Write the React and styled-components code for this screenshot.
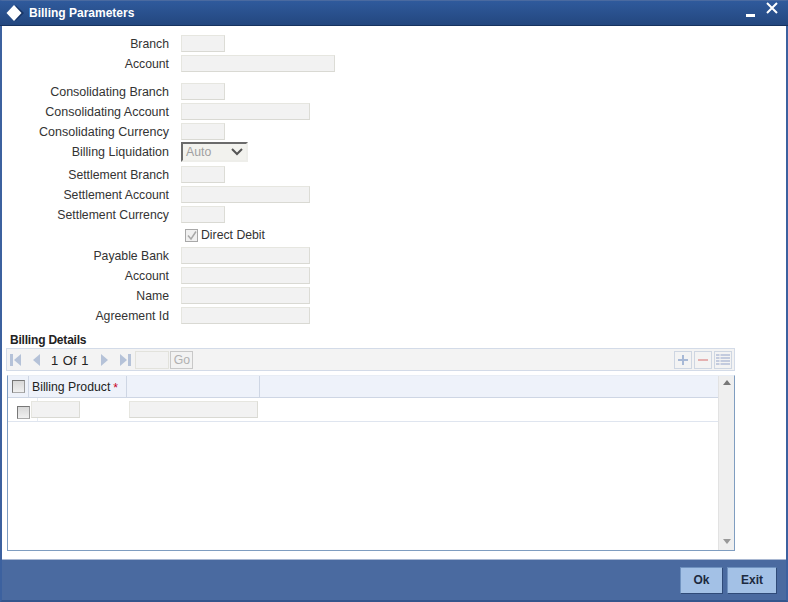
import React from "react";
import styled, { createGlobalStyle } from "styled-components";

const GlobalStyle = createGlobalStyle`
  html, body { margin: 0; padding: 0; background: #fff; }
  body { font-family: "Liberation Sans", Arial, sans-serif; font-size: 12.25px; color: #333; }
`;

const Window = styled.div`
  width: 788px;
  height: 602px;
  box-sizing: border-box;
  display: flex;
  flex-direction: column;
  background: #fff;
  border-top: 1px solid #4a6aa0;
  border-left: 2px solid #3c619f;
  border-right: 2px solid #3c619f;
  border-bottom: 2px solid #34558c;
`;

const TitleBar = styled.header`
  height: 24px;
  flex: none;
  display: flex;
  align-items: center;
  padding: 0 0 0 6px;
  margin-left: -2px;
  margin-right: -2px;
  background: linear-gradient(#2f5a9c, #23477f);
  border-bottom: 1px solid #16325f;
  color: #fff;
`;

const Title = styled.h1`
  margin: 0 0 0 5px;
  font-size: 12px;
  font-weight: 700;
  flex: 1;
`;

const WinControls = styled.div`
  display: flex;
  align-items: flex-start;
  gap: 11px;
  margin: -6px 10px 0 0;
`;

const Form = styled.section`
  display: flex;
  flex-direction: column;
  padding-top: 8px;
`;

const Row = styled.div`
  display: flex;
  align-items: center;
  height: 20px;
  margin-top: ${(p) => p.$top || 0}px;
`;

const Label = styled.label`
  width: 167px;
  text-align: right;
  margin-right: 12px;
  flex: none;
  white-space: nowrap;
  font-size: ${(p) => (p.$wide ? "12.5px" : "inherit")};
`;

const Input = styled.div`
  box-sizing: border-box;
  width: ${(p) => p.$w}px;
  height: 17px;
  margin-bottom: 1px;
  flex: none;
  background: #f2f2f2;
  border: 1px solid #e6e6e0;
  border-bottom-color: #d9d9d3;
  border-right-color: #dcdcd6;
`;

const SelectBox = styled.div`
  box-sizing: border-box;
  width: 67px;
  height: 20px;
  display: flex;
  align-items: center;
  justify-content: space-between;
  padding: 0 3px 0 3px;
  background: #f2f2ee;
  border: 2px solid #eeeeea;
  border-top-color: #6b6b6b;
  border-left-color: #6b6b6b;
  color: #a0a0a0;
`;

const CheckRow = styled(Row)`
  padding-left: 183px;
  gap: 3px;
  color: #333;
`;

const DisabledCheck = styled.span`
  box-sizing: border-box;
  width: 13px;
  height: 13px;
  display: flex;
  background: #f0f0f0;
  border: 1px solid #a8a8a8;
`;

const SectionTitle = styled.h2`
  margin: 6px 0 0 8px;
  font-size: 12px;
  letter-spacing: -0.2px;
  line-height: 16px;
  font-weight: 700;
  color: #222;
`;

const Toolbar = styled.div`
  box-sizing: border-box;
  width: 729px;
  height: 23px;
  margin: 0 0 0 4px;
  display: flex;
  align-items: center;
  padding: 0 2px 0 3px;
  background: #f3f3f3;
  border: 1px solid #d3dbe8;
`;

const Pager = styled.span`
  margin: 1px 12px 0 10px;
  font-size: 13px;
  word-spacing: 1px;
  color: #222;
`;

const PageInput = styled.div`
  box-sizing: border-box;
  width: 34px;
  height: 18px;
  margin-left: 4px;
  background: #f2f2f2;
  border: 1px solid #e2e2dc;
`;

const GoButton = styled.div`
  box-sizing: border-box;
  width: 23px;
  height: 18px;
  margin-left: 1px;
  border: 1px solid #c8c8c8;
  background: #f2f2f2;
  color: #b0b0b0;
  text-align: center;
  line-height: 16px;
`;

const Spacer = styled.div`
  flex: 1;
`;

const ToolButton = styled.div`
  box-sizing: border-box;
  width: 18px;
  height: 18px;
  margin-left: 2px;
  display: flex;
  align-items: center;
  justify-content: center;
  border: 1px solid #ced6e2;
  background: #f3f3f3;
`;

const Table = styled.div`
  box-sizing: border-box;
  width: 728px;
  height: 176px;
  margin: 4px 0 0 5px;
  display: flex;
  border: 1px solid #7f9dc0;
  border-top-color: #e8edf5;
`;

const TableMain = styled.div`
  flex: 1;
  min-width: 0;
`;

const HeadRow = styled.div`
  height: 21px;
  display: flex;
  background: #eef2fa;
  border-bottom: 1px solid #ced6e4;
`;

const HeadCell = styled.div`
  box-sizing: border-box;
  width: ${(p) => p.$w}px;
  flex: none;
  display: flex;
  align-items: center;
  padding-left: ${(p) => p.$pad || 0}px;
  border-right: 1px solid #ced6e4;
  color: #222;
`;

const Required = styled.span`
  color: #c8001e;
  margin: 3px 0 0 3px;
`;

const Check = styled.span`
  box-sizing: border-box;
  width: 13px;
  height: 13px;
  flex: none;
  background: linear-gradient(#d8d8d8, #f0f0f0);
  border: 1px solid #777;
  border-right-color: #999;
  border-bottom-color: #aaa;
`;

const BodyRow = styled.div`
  height: 23px;
  display: flex;
  align-items: center;
  border-bottom: 1px solid #dfe5ef;
`;

const CheckCell = styled.div`
  box-sizing: border-box;
  width: 30px;
  height: 100%;
  flex: none;
  display: flex;
  align-items: center;
  padding: 5px 0 0 9px;
  border-right: 1px solid #e6ebf3;
`;

const RowInput = styled(Input)`
  margin-bottom: 0;
  margin-left: ${(p) => p.$left}px;
`;

const ScrollBar = styled.div`
  width: 15px;
  flex: none;
  display: flex;
  flex-direction: column;
  justify-content: space-between;
  align-items: center;
  padding: 4px 0 6px;
  background: #efefef;
  border-left: 1px solid #e2e2e2;
`;

const Footer = styled.footer`
  margin-top: auto;
  height: 40px;
  flex: none;
  display: flex;
  justify-content: flex-end;
  align-items: center;
  gap: 4px;
  padding-right: 9px;
  background: #4a6aa0;
  border-top: 1px solid #a9b8d2;
`;

const FootButton = styled.button`
  box-sizing: border-box;
  height: 27px;
  width: ${(p) => p.$w}px;
  padding: 0;
  font: 700 12px "Liberation Sans", Arial, sans-serif;
  color: #1c2a40;
  background: #a3c1e6;
  border: 1px solid #6f92c0;
  border-right-color: #2f4a78;
  border-bottom-color: #2f4a78;
`;

const Diamond = () => (
  <svg width="18" height="18" viewBox="0 0 18 18">
    <path d="M9.5 1 L18 9 L9.5 17 Z" fill="#0f2a55" opacity="0.7" />
    <path d="M8 1 L15.5 9 L8 17 L0.5 9 Z" fill="#fff" />
  </svg>
);

const MinIcon = () => (
  <svg width="9" height="16" viewBox="0 0 9 16">
    <rect x="0" y="12" width="9" height="3" fill="#fff" />
  </svg>
);

const CloseIcon = () => (
  <svg width="12" height="12" viewBox="0 0 12 12">
    <path d="M1 1 L11 11 M11 1 L1 11" stroke="#fff" strokeWidth="2" />
  </svg>
);

const Chevron = () => (
  <svg width="12" height="8" viewBox="0 0 12 8">
    <path d="M1 1 L6 6 L11 1" fill="none" stroke="#555" strokeWidth="2" />
  </svg>
);

const Tick = () => (
  <svg width="11" height="11" viewBox="0 0 11 11">
    <path d="M2 5.5 L5 9 L10 1.5" fill="none" stroke="#a8a8a8" strokeWidth="1.5" />
  </svg>
);

const PageIcon = ({ dir, bar, gap }) => (
  <svg
    width={bar ? 12 : 8}
    height="14"
    viewBox={bar ? "0 0 12 14" : "0 0 8 14"}
    style={{ marginRight: gap }}
  >
    {bar && dir === "left" && <rect x="0" y="1" width="3" height="12" fill="#b5c2d8" />}
    {bar && dir === "right" && <rect x="9" y="1" width="3" height="12" fill="#b5c2d8" />}
    {dir === "left" ? (
      <path d={bar ? "M11 1 V13 L4 7 Z" : "M7 1 V13 L0 7 Z"} fill="#b5c2d8" />
    ) : (
      <path d="M1 1 V13 L8 7 Z" fill="#b5c2d8" />
    )}
  </svg>
);

const PlusIcon = () => (
  <svg width="12" height="12" viewBox="0 0 12 12">
    <path d="M6 1 V11 M1 6 H11" stroke="#a8b9d6" strokeWidth="2" />
  </svg>
);

const MinusIcon = () => (
  <svg width="12" height="12" viewBox="0 0 12 12">
    <path d="M1 6 H11" stroke="#e5b0b0" strokeWidth="2" />
  </svg>
);

const ListIcon = () => (
  <svg width="14" height="12" viewBox="0 0 14 12">
    <path d="M0 1 H14 M0 4 H14 M0 7 H14 M0 10 H14" stroke="#b4bfd8" strokeWidth="1.5" />
    <path d="M4 0 V12" stroke="#f3f3f3" strokeWidth="1" />
  </svg>
);

const ScrollArrow = ({ up }) => (
  <svg width="8" height="5" viewBox="0 0 8 5">
    <path d={up ? "M4 0 L8 5 H0 Z" : "M0 0 H8 L4 5 Z"} fill={up ? "#777" : "#999"} />
  </svg>
);

const Field = ({ label, w, top, wide }) => (
  <Row $top={top}>
    <Label $wide={wide}>{label}</Label>
    <Input $w={w} />
  </Row>
);

export default function App() {
  return (
    <>
      <GlobalStyle />
      <Window>
        <TitleBar>
          <Diamond />
          <Title>Billing Parameters</Title>
          <WinControls>
            <MinIcon />
            <CloseIcon />
          </WinControls>
        </TitleBar>

        <Form>
          <Field label="Branch" w={44} />
          <Field label="Account" w={154} />
          <Field label="Consolidating Branch" w={44} top={8} wide />
          <Field label="Consolidating Account" w={129} wide />
          <Field label="Consolidating Currency" w={44} wide />
          <Row>
            <Label $wide>Billing Liquidation</Label>
            <SelectBox>
              Auto
              <Chevron />
            </SelectBox>
          </Row>
          <Field label="Settlement Branch" w={44} top={3} />
          <Field label="Settlement Account" w={129} />
          <Field label="Settlement Currency" w={44} />
          <CheckRow>
            <DisabledCheck>
              <Tick />
            </DisabledCheck>
            Direct Debit
          </CheckRow>
          <Field label="Payable Bank" w={129} top={1} />
          <Field label="Account" w={129} />
          <Field label="Name" w={129} />
          <Field label="Agreement Id" w={129} />
        </Form>

        <SectionTitle>Billing Details</SectionTitle>
        <Toolbar>
          <PageIcon dir="left" bar gap={11} />
          <PageIcon dir="left" />
          <Pager>1 Of 1</Pager>
          <PageIcon dir="right" gap={11} />
          <PageIcon dir="right" bar />
          <PageInput />
          <GoButton>Go</GoButton>
          <Spacer />
          <ToolButton><PlusIcon /></ToolButton>
          <ToolButton><MinusIcon /></ToolButton>
          <ToolButton><ListIcon /></ToolButton>
        </Toolbar>

        <Table>
          <TableMain>
            <HeadRow>
              <HeadCell $w={21} $pad={4}><Check /></HeadCell>
              <HeadCell $w={98} $pad={3}>
                Billing Product<Required>*</Required>
              </HeadCell>
              <HeadCell $w={133} />
            </HeadRow>
            <BodyRow>
              <CheckCell><Check /></CheckCell>
              <RowInput $w={49} $left={-7} />
              <RowInput $w={129} $left={49} />
            </BodyRow>
          </TableMain>
          <ScrollBar>
            <ScrollArrow up />
            <ScrollArrow />
          </ScrollBar>
        </Table>

        <Footer>
          <FootButton $w={43}>Ok</FootButton>
          <FootButton $w={50}>Exit</FootButton>
        </Footer>
      </Window>
    </>
  );
}
